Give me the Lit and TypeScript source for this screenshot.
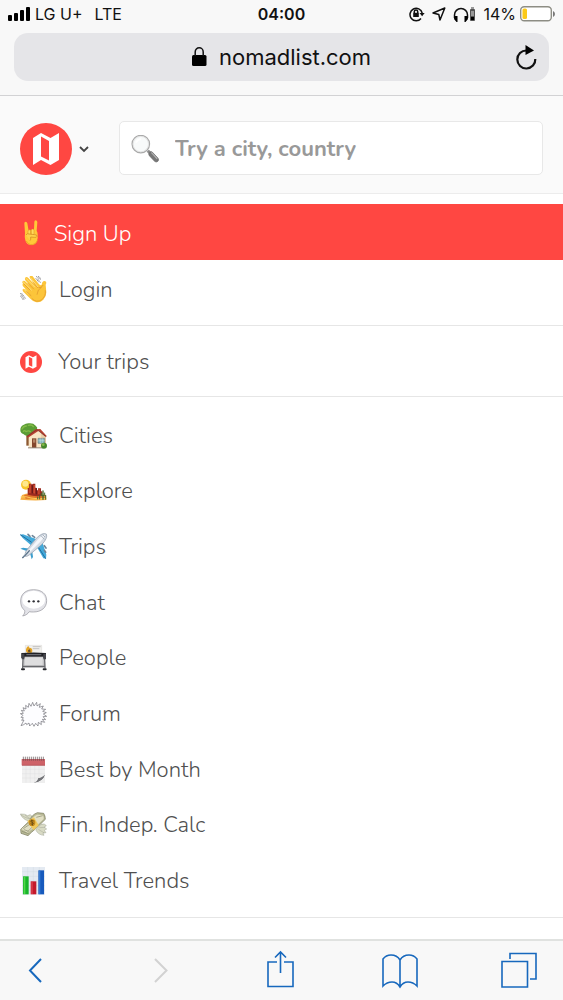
import { LitElement, html, svg, css, TemplateResult, SVGTemplateResult } from "lit";
import { customElement, property } from "lit/decorators.js";

const mapMark = svg`
  <circle cx="26" cy="26" r="26" fill="#ff4742" />
  <path fill="#fff" fill-rule="evenodd" d="M13 15l8-5 9.500 5 8.500-5v27l-8.500 5-9.500-5-8 5z M21 13.500v20l8 4v-19.500z" />
`;

const icons: Record<string, { box: string; art: SVGTemplateResult }> = {
  horns: {
    box: "60 61 72 84",
    art: svg`
      <path d="M73 71q0-5 4-5t5 5l4 23 7-3 9-2 1-22q0-5 4-5t5 5l-2 27q3 3 3 11v11q-3 19-19 20-15 0-18-14-3-8-1-22z" fill="#ffc938" />
      <path d="M84 93q3-5 7-2l1 14q-4 6-8 1zM94 90q4-4 8 0v14q-4 5-8 1z" fill="#ffdc5c" stroke="#d98a1e" stroke-width="1.500" />
      <path d="M78 106q3-6 9-3l17 2q8 0 7 5-1 4-8 3l-11-1q1 8-2 11" fill="#ffd24a" stroke="#cd8320" stroke-width="2" />
      <path d="M79 124q6 12 18 11 12-1 15-13" fill="none" stroke="#eda828" stroke-width="3" />`,
  },
  wave: {
    box: "60 225 84 84",
    art: svg`
      <path d="M69 248q-4-5 0-8 4-2 8 2l14 13-15-17q-3-6 1-9 4-2 8 2l19 20-14-19q-3-6 2-8 4-1 7 3l17 21q5 7 9 3 1-8 5-10 5-3 8 1 2 3-1 9l2 23q0 13-9 22-10 10-23 7-8-2-15-9l-22-22q-4-5-1-8 3-2 7 1l9 8-16-17q-3-5 0-8 3-2 7 1z" fill="#fcc53a" />
      <path d="M70 243l24 24M79 233l25 25M92 231l22 27M72 265l15 15" fill="none" stroke="#ffe083" stroke-width="3" stroke-linecap="round" />
      <path d="M73 250l17 17M84 247l17 17M100 245l13 15M80 272l13 12M116 260q9 2 13-7M111 280q1-15 13-21M96 293q14 14 29 3 13-10 11-27" fill="none" stroke="#dc912a" stroke-width="2" stroke-linecap="round" />
      <path d="M108 226l15 10M112 233l10 12M107 232l10 12M114 225l9 8M61 276l12 19M65 277l12 16M61 284l9 13" fill="none" stroke="#63646b" stroke-width="2" stroke-dasharray="5 1" />`,
  },
  house: {
    box: "60 34 84 84",
    art: svg`
      <path d="M79 66h9v39h-9z" fill="#8d5a32" />
      <path d="M61 58q0-11 9-15 9-7 20-5 11 0 17 7 7 5 4 12-2 8-12 10-6 7-15 8-8 2-14-5-9-3-9-12z" fill="#5b9d35" />
      <path d="M66 55q4-9 13-9M85 44q11-3 15 4M78 63q8-5 13 0M70 62q3-4 6-1" fill="none" stroke="#84bb48" stroke-width="4" stroke-linecap="round" />
      <path d="M86 76l28-21 24 22v35H86z" fill="#f9e5c5" />
      <path d="M123 63l15 13v36h-13z" fill="#eacfa8" />
      <path d="M79 78l27-22 15-1 20 22-5 1-20-18-32 21z" fill="#b84231" />
      <path d="M81 77l30-20 26 20" fill="none" stroke="#742b28" stroke-width="2" />
      <path d="M96 83h13v29H96z" fill="#84472d" />
      <path d="M99 86h7v10h-7z" fill="#b68565" />
      <path d="M114 83h20v15h-20z" fill="#86b9c4" stroke="#748380" stroke-width="2" />
      <path d="M121 83v14M127 83v14M115 90h19" stroke="#e9f4ec" />
      <path d="M84 110h46v3H84z" fill="#978779" />
      <circle cx="132" cy="105" r="9" fill="#46872d" />
      <circle cx="130" cy="102" r="4" fill="#85b947" />`,
  },
  desert: {
    box: "60 202 84 84",
    art: svg`
      <circle cx="78" cy="225" r="15" fill="#f9c62c" />
      <circle cx="76" cy="222" r="9" fill="#ffe98c" />
      <path d="M66 256q12-6 30-5l42 5 1 15q-36 3-78-1z" fill="#f6ae42" />
      <path d="M72 257q17-6 35-1l30 5v6H77z" fill="#e1752b" />
      <path d="M83 255v-19l4-2v-12h8v3l4-3h7v12l5 1v7h3v-6h9v7l4 4v11q-20 4-44-3z" fill="#9d2b20" />
      <path d="M89 224h4l-1 27-5-2zM101 226h4v26l-5-2zM115 238h4v16h-5z" fill="#c9492f" />
      <path d="M97 227v24M109 236v18" fill="none" stroke="#5e1719" stroke-width="3" />
      <path d="M62 262q18-3 31 3 18 4 46 1" fill="none" stroke="#ffce59" stroke-width="3" />
      <g fill="none" stroke="#44652b" stroke-linecap="round" stroke-linejoin="round">
        <path d="M129 269v-25" stroke-width="4" />
        <path d="M124 251v7h10v-8M137 269v-12M119 268v-11M113 268v-6" stroke-width="3" />
      </g>`,
  },
  plane: {
    box: "60 369 84 84",
    art: svg`
      <path d="M60 374l9-1 39 14-16 18-24-21zM138 446l1-12-12-38-16 16 19 33z" fill="#43aadb" />
      <path d="M61 374l34 23M137 446l-21-33" stroke="#246e9d" stroke-width="3" />
      <path d="M61 416l8-3 21 3-8 8zM95 448l4-7-3-22-7 7z" fill="#3d9fce" />
      <path d="M78 423l30-37q19-20 31-14 5 12-13 31L89 434q-8 6-13 5-2-7 2-16z" fill="#d4dbe4" stroke="#8c98a8" stroke-width="2" />
      <path d="M82 426l31-37q14-15 23-15-5 11-15 21L86 430z" fill="#f5f7fb" />
      <path d="M123 377l10 11M128 374l7 7" stroke="#8a95a3" stroke-width="2" />
      <path d="M84 373l6 6M97 377l7 5M133 407l5 7M133 421l4 6" stroke="#6f8598" stroke-width="5" stroke-linecap="round" />
      <path d="M88 422l-20 21" stroke="#5b7288" stroke-width="4" stroke-linecap="round" />
      <path d="M84 423l-16 17" stroke="#c9d6df" stroke-width="2" />`,
  },
  chat: {
    box: "60 56 84 84",
    art: svg`
      <path d="M101 58c24 0 39 13 39 33 0 21-16 34-40 34-5 0-9 0-12-1-4 6-10 11-20 13 6-7 7-11 6-17C65 114 62 104 62 92c0-21 15-34 39-34z" fill="#e3e3e8" stroke="#92929a" stroke-width="2" />
      <ellipse cx="101" cy="88" rx="34" ry="27" fill="#fff" />
      <g fill="#2f2f35"><circle cx="87" cy="93" r="3.500" /><circle cx="101" cy="93" r="3.500" /><circle cx="115" cy="93" r="3.500" /></g>`,
  },
  printer: {
    box: "60 223 84 84",
    art: svg`
      <path d="M76 227h49v25H76z" fill="#f1f0ed" stroke="#cbc8c3" />
      <path d="M78 245q-1-11 7-16l3 5q9 0 9 9 0 8-9 8-8 0-10-6z" fill="#e4a324" />
      <path d="M84 242l6-3 2 7-7 1z" fill="#62472d" />
      <path d="M98 231h24M98 237h20" stroke="#aaa" stroke-width="2" />
      <path d="M68 263h67l2 32H66z" fill="#c3c3c5" />
      <path d="M74 265h54v22H74z" fill="#dededf" />
      <path d="M64 250q37-3 74 0v15h-8v-4H73v4h-9z" fill="#202126" />
      <path d="M79 255h45" stroke="#77787f" stroke-width="3" />
      <path d="M65 252h8v17h-8zM130 252h8v17h-8z" fill="#45464c" />
      <path d="M69 267l-1 29M134 267l1 29M69 290h65" stroke="#54555a" stroke-width="3" />
      <path d="M66 299h6M131 299h6" stroke="#25262b" stroke-width="6" stroke-linecap="round" />`,
  },
  burst: {
    box: "60 390 84 84",
    art: svg`
      <path d="M63 467l9-17-7 1 5-8-7-1 6-6-8-5 9-1-6-9 9 2-4-10 9 4-1-11 8 6 2-12 6 9 5-12 4 11 8-11 1 11 10-7-3 11 12-4-5 9 12 1-9 6 11 4-9 4 10 7-11 1 8 9-10-1 7 9-11-3 1 10-9-7-1 11-7-8-5 9-5-9-8 8-2-9-7 5-2-5-7 5z" fill="#fdfdff" stroke="#6e6e76" stroke-width="2" stroke-linejoin="miter" />`,
  },
  calendar: {
    box: "60 47 84 84",
    art: svg`
      <path d="M66 59h69v48l-26 21H66z" fill="#f0f0f0" />
      <path d="M65 56h70v19H65z" fill="#ce6268" />
      <path d="M66 75h69" stroke="#aa484f" stroke-width="2" />
      <path d="M78 77v50M91 77v50M104 77v49M117 77v43M66 87h69M66 100h69M66 113h61" stroke="#dcdcde" />
      <path d="M101 128q12-5 14-15 8 0 20-10-4 20-34 25z" fill="#737478" />
      <path d="M105 128q21-4 30-21v21z" fill="#eee" />
      <path d="M70 49v12M76 49v12M82 49v12M88 49v12M94 49v12M100 49v12M106 49v12M112 49v12M118 49v12M124 49v12M130 49v12" stroke="#58474a" stroke-width="2" />`,
  },
  money: {
    box: "60 214 84 84",
    art: svg`
      <path d="M86 244q-17-4-25-21 14-1 22 5 9-7 13 2l2 14zM111 267l12-13q11-4 16 4l-6 4 7 6-7 4 5 7-9 1 3 7q-17-1-24-15z" fill="#d9dbc5" stroke="#9fa292" stroke-width="1.500" />
      <path d="M63 226q11 8 27 12M75 226l16 12M118 264l17-1M115 269l18 11" stroke="#8b8e80" fill="none" />
      <path d="M62 269l28-27q4-16 22-23l19 2q5 7 5 18l-30 29q-11 9-22 20l-21-7z" fill="#b8b996" stroke="#77775a" stroke-width="2" />
      <path d="M64 268l29-22q4-15 18-21l17 1q4 5 3 12l-28 26q-10 5-20 16z" fill="#e2dfc4" />
      <path d="M70 267l25-17M109 233l19-5M83 276l21-21M66 275l20 7M72 270l14 5" stroke="#88896b" stroke-width="2" />
      <path d="M82 244l20-11 14 24-15 15z" fill="#efc95f" />
      <circle cx="96" cy="249" r="10" fill="#c68b1e" />
      <path d="M101 244q-8-4-9 1l8 5q0 7-8 2M95 240l3 18" fill="none" stroke="#574115" stroke-width="2" />`,
  },
  chart: {
    box: "60 382 84 84",
    art: svg`
      <path d="M66 382h69v83H66z" fill="#e4eaf2" />
      <path d="M66 396h69M66 410h69M66 424h69M66 438h69M66 452h69M83 382v83M100 382v83M118 382v83" stroke="#cbd3df" />
      <path d="M69 410h17v54H69z" fill="#19b52b" /><path d="M71 411h5v52h-5z" fill="#53d74c" />
      <path d="M92 425h17v39H92z" fill="#c4192c" /><path d="M94 426h4v37h-4z" fill="#dd4150" />
      <path d="M115 392h17v72h-17z" fill="#175abd" /><path d="M117 393h4v70h-4z" fill="#367bd2" />`,
  },
  map: { box: "0 0 52 52", art: mapMark },
  search: {
    box: "0 0 80 80",
    art: svg`
      <path d="M45 48l6-6 8 7-7 7z" fill="#8b8b8b" />
      <path d="M52 52q3-6 8-4l17 18q4 5 0 9t-9 1L53 60q-4-4-1-8z" fill="#777" stroke="#5d5d5d" stroke-width="1.500" />
      <path d="M58 50l17 18" stroke="#bbb" stroke-width="3" />
      <circle cx="28" cy="26" r="25" fill="#f1f3f3" stroke="#aaa" stroke-width="3.500" />
      <circle cx="28" cy="26" r="22" fill="#f8fafa" stroke="#ddd" stroke-width="2" />
      <path d="M14 22q5-10 15-10" fill="none" stroke="#fff" stroke-width="5" />`,
  },
};

const glyph = (name: string): TemplateResult =>
  html`<svg class="glyph" viewBox=${icons[name].box} aria-hidden="true">${icons[name].art}</svg>`;

@customElement("status-bar")
class StatusBar extends LitElement {
  static styles = css`
    :host { display: grid; grid-template-columns: 1fr auto 1fr; align-items: center; height: 28px; padding: 0 8px; font: 16px/20px Inter, sans-serif; color: #111; box-sizing: border-box; }
    .side { display: flex; align-items: center; gap: 4px; }
    .net { margin-left: 8px; }
    .end { justify-content: flex-end; gap: 7px; }
    .clock { font-weight: 600; }
    .charge { display: flex; align-items: center; gap: 4px; }
    svg { display: block; flex: none; }
  `;
  render() {
    return html`
      <div class="side">
        <svg width="23" height="14" viewBox="0 0 23 14" aria-label="Signal" role="img">
          <rect x="0" y="8" width="4" height="6" rx="1" /><rect x="6" y="6" width="4" height="8" rx="1" />
          <rect x="12" y="3" width="4" height="11" rx="1" /><rect x="18" y="0" width="4" height="14" rx="1" />
        </svg>
        <span>LG U+</span><span class="net">LTE</span>
      </div>
      <div class="clock">04:00</div>
      <div class="side end">
        <svg width="16" height="16" viewBox="0 0 16 16" fill="none" stroke="#111" stroke-width="1.500" aria-hidden="true">
          <path d="M12 12.500A6.200 6.200 0 1 1 13.200 7" /><path d="M10.500 7h5.200l-2.600 3.200z" fill="#111" stroke="none" />
          <rect x="4.200" y="6.800" width="5.600" height="4.200" fill="#111" stroke="none" /><path d="M5.300 7V5.600a1.700 1.700 0 0 1 3.400 0V7" />
        </svg>
        <svg width="14" height="14" viewBox="0 0 14 14" fill="none" stroke="#111" stroke-width="1.500" stroke-linejoin="round" aria-hidden="true"><path d="M12.800 1L8 13 6.800 7.500 1 6z" /></svg>
        <svg width="23" height="15" viewBox="0 0 23 15" aria-hidden="true">
          <path d="M1.500 11V8a6.500 6.500 0 0 1 13 0v3" fill="none" stroke="#111" stroke-width="1.500" />
          <path d="M1.500 9H4.500v6H3.500L1 12zM14.500 9h-3v6h1l2.500-3z" /><rect x="17" y="2" width="5" height="12" rx="1" fill="#555" /><path d="M18 0h3v2h-3zM18 4h3v5h-3z" fill="#999" /><path d="M18 10h3v3h-3z" />
        </svg>
        <span class="charge">14%
          <svg width="35" height="16" viewBox="0 0 35 16" aria-hidden="true">
            <rect x=".7" y=".7" width="30.600" height="14" rx="3.500" fill="#fff" stroke="#8d8d84" stroke-width="1.400" />
            <path d="M33 5q2 1 2 3t-2 3z" fill="#777" /><rect x="2.500" y="2.500" width="4.500" height="10.500" rx="1.500" fill="#fbc919" />
          </svg>
        </span>
      </div>`;
  }
}

@customElement("address-bar")
class AddressBar extends LitElement {
  static styles = css`
    :host { display: block; padding: 5px 14px 14px; border-bottom: 1px solid #d2d2d4; }
    .field { display: grid; grid-template-columns: 46px 1fr 46px; align-items: center; height: 48px; border-radius: 14px; background: #e5e5e8; }
    button { border: 0; padding: 0; background: none; color: #111; font: 22px/28px Inter, sans-serif; cursor: pointer; }
    .url { grid-column: 2; display: flex; align-items: center; justify-content: center; gap: 12px; }
    .reload { display: grid; place-items: center; height: 48px; }
    svg { display: block; }
  `;
  render() {
    return html`<div class="field">
      <button class="url">
        <svg width="15" height="20" viewBox="0 0 15 20" aria-hidden="true"><rect y="8" width="14.500" height="11" rx="1.500" /><path d="M3.200 9V5a4 4.200 0 0 1 8 0V9" fill="none" stroke="#111" stroke-width="1.500" /></svg>
        nomadlist.com
      </button>
      <button class="reload" aria-label="Reload">
        <svg width="22" height="25" viewBox="0 0 22 25" aria-hidden="true"><path d="M11.500 5.500a9 9 0 1 0 8.800 8.500" fill="none" stroke="#111" stroke-width="2.200" /><path d="M10.500 0v10l8.500-4.500z" /></svg>
      </button>
    </div>`;
  }
}

@customElement("site-header")
class SiteHeader extends LitElement {
  static styles = css`
    :host { display: flex; align-items: center; gap: 30px; padding: 25px 20px 18px; background: #fafafa; border-bottom: 1px solid #ececec; }
    .brand { display: flex; align-items: center; gap: 7px; padding: 2px 0 0; border: 0; background: none; cursor: pointer; }
    .logo { width: 52px; height: 52px; }
    .logo svg, .lens svg { display: block; width: 100%; height: 100%; }
    .search { flex: 1; min-width: 0; display: flex; align-items: center; gap: 16px; height: 54px; padding: 2px 11px 0; box-sizing: border-box; border: 1px solid #e8e8e8; border-radius: 5px; background: #fff; }
    .lens { width: 28px; height: 28px; flex: none; }
    input { flex: 1; min-width: 0; padding: 0; border: 0; outline: 0; background: none; color: #555; font: 700 22px/28px Nunito, Lato, sans-serif; }
    input::placeholder { color: #999; opacity: 1; }
  `;
  render() {
    return html`
      <button class="brand" aria-label="Open menu">
        <span class="logo">${glyph("map")}</span>
        <svg width="10" height="7" viewBox="0 0 10 7" aria-hidden="true"><path d="M1 1l4 4 4-4" fill="none" stroke="#444" stroke-width="1.800" /></svg>
      </button>
      <label class="search">
        <span class="lens">${glyph("search")}</span>
        <input type="text" placeholder="Try a city, country" aria-label="Search a city or country" />
      </label>`;
  }
}

@customElement("menu-link")
class MenuLink extends LitElement {
  @property() icon = "";
  @property() label = "";
  @property({ reflect: true }) kind = "plain";
  static styles = css`
    :host { display: flex; align-items: center; color: #505050; }
    a { flex: 1; display: flex; align-items: center; gap: 11px; padding: 0 20px; color: inherit; text-decoration: none; font: 300 22px/28px Nunito, Lato, sans-serif; }
    .glyph { display: block; flex: none; width: 28px; height: 28px; }
    :host([kind="primary"]) { color: #fff; }
    :host([kind="primary"]) a { gap: 10px; }
    :host([kind="primary"]) .glyph { width: 24px; }
    :host([kind="brand"]) a { gap: 16px; }
    :host([kind="brand"]) .glyph { width: 22px; height: 22px; }
  `;
  render() {
    return html`<a href="#">${glyph(this.icon)}<span>${this.label}</span></a>`;
  }
}

@customElement("tool-bar")
class ToolBar extends LitElement {
  static styles = css`
    :host { display: flex; align-items: center; justify-content: space-between; height: 61px; padding: 0 26px 2px 17px; background: #f8f8f8; border-top: 2px solid #e0e2e0; box-sizing: border-box; }
    .history { display: flex; gap: 16vw; }
    button { width: 36px; height: 40px; padding: 0; border: 0; background: none; color: #1768bd; cursor: pointer; }
    button:disabled { color: #d2d2d2; }
    svg { display: block; width: 36px; height: 40px; fill: none; stroke: currentColor; stroke-width: 1.600; }
    .arrow { stroke-width: 2; }
  `;
  render() {
    return html`
      <div class="history">
        <button aria-label="Back"><svg class="arrow" viewBox="0 0 36 40"><path d="M24 9L13 20.500 24 32" /></svg></button>
        <button aria-label="Forward" disabled><svg class="arrow" viewBox="0 0 36 40"><path d="M12 9l11.500 11.500L12 32" /></svg></button>
      </div>
      <button aria-label="Share"><svg viewBox="0 0 36 40"><path d="M15 12H6v24.500h25V12h-9M18.500 23V2M13 7.500L18.500 2 24 7.500" /></svg></button>
      <button aria-label="Bookmarks"><svg viewBox="0 0 36 40"><path d="M18 10v27M18 10q-3-5-9-5-5 0-8 4v27q4-4 9-4t8 5q3-5 8-5t9 4V9q-3-4-8-4-6 0-9 5z" /></svg></button>
      <button aria-label="Tabs"><svg viewBox="0 0 36 40"><path d="M1 11.500h25.500V37H1zM9 9V3.500h26V29h-6" /></svg></button>`;
  }
}

const pages = [
  ["house", "Cities"],
  ["desert", "Explore"],
  ["plane", "Trips"],
  ["chat", "Chat"],
  ["printer", "People"],
  ["burst", "Forum"],
  ["calendar", "Best by Month"],
  ["money", "Fin. Indep. Calc"],
  ["chart", "Travel Trends"],
];

@customElement("app-root")
class AppRoot extends LitElement {
  static styles = css`
    :host { display: flex; flex-direction: column; min-height: 100vh; background: #fff; }
    .chrome { background: #f8f8f8; }
    .menu { flex: 1; display: flex; flex-direction: column; padding: 10px 0 21px; }
    .signup { height: 53px; padding-top: 3px; display: grid; background: #ff4742; }
    .login { height: 59px; padding-bottom: 6px; display: grid; border-bottom: 1px solid #e6e6e6; }
    .trips { height: 68px; padding-top: 2px; display: grid; border-bottom: 1px solid #e6e6e6; }
    .pages { flex: 1; display: grid; grid-auto-rows: minmax(48px, 1fr); padding: 11px 0 8px; border-bottom: 1px solid #e6e6e6; }
  `;
  render() {
    return html`
      <div class="chrome"><status-bar></status-bar><address-bar></address-bar></div>
      <site-header></site-header>
      <nav class="menu">
        <div class="signup"><menu-link kind="primary" icon="horns" label="Sign Up"></menu-link></div>
        <div class="login"><menu-link icon="wave" label="Login"></menu-link></div>
        <div class="trips"><menu-link kind="brand" icon="map" label="Your trips"></menu-link></div>
        <div class="pages">${pages.map(([icon, label]) => html`<menu-link icon=${icon} label=${label}></menu-link>`)}</div>
      </nav>
      <tool-bar></tool-bar>`;
  }
}
